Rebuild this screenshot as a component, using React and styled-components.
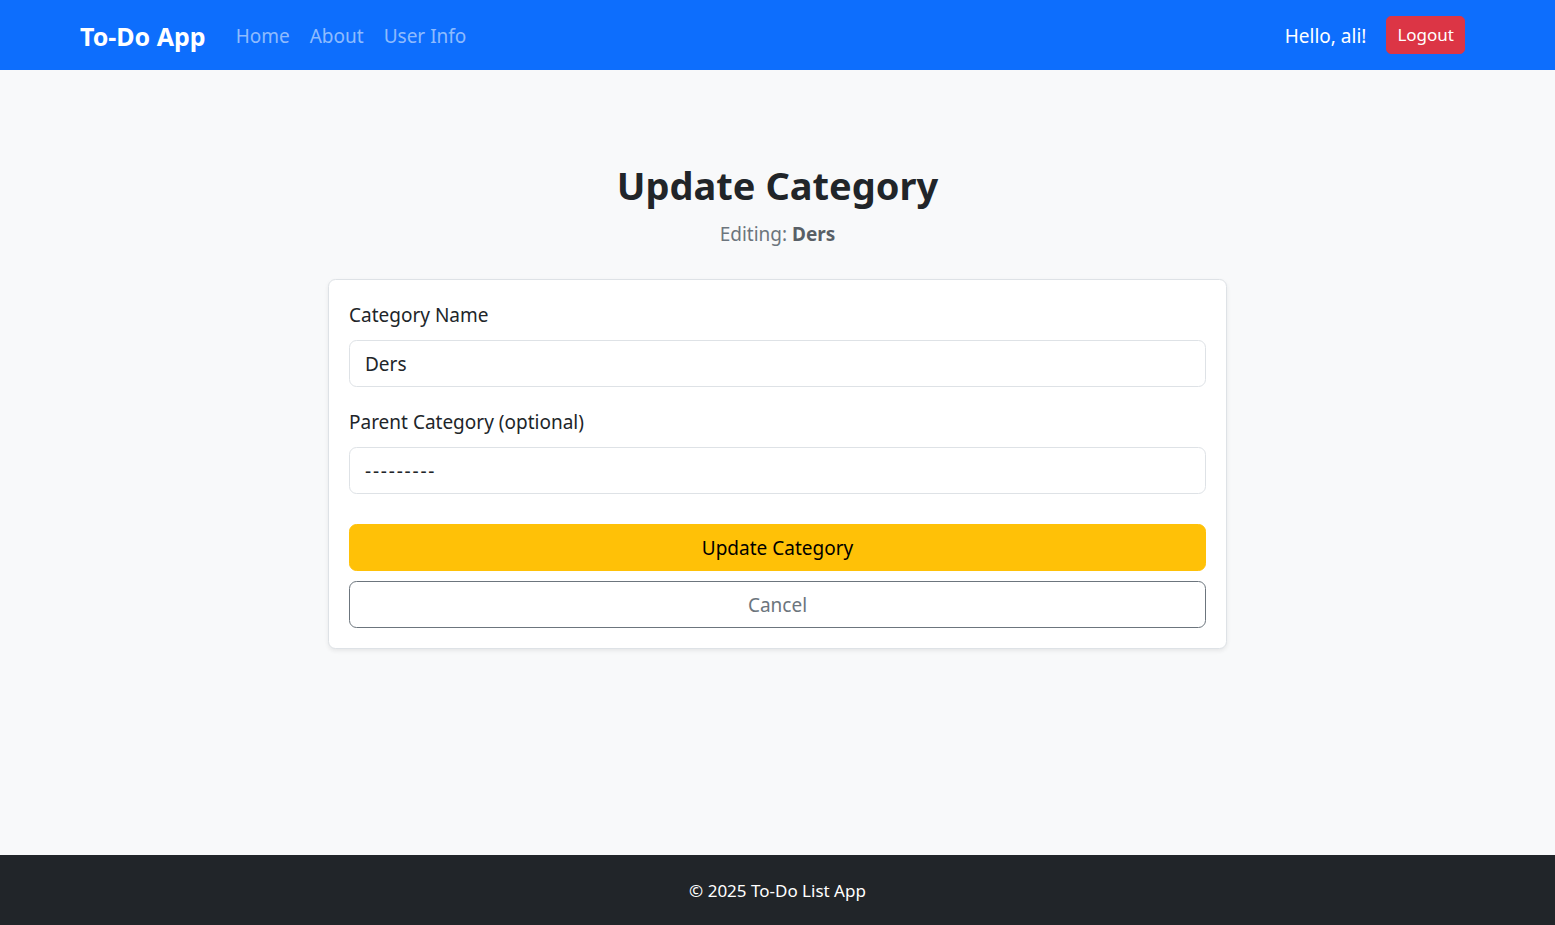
import React from "react";
import styled, { createGlobalStyle } from "styled-components";

const Global = createGlobalStyle`
  * { box-sizing: border-box; }
  html, body { margin: 0; padding: 0; }
  body {
    font-family: "Segoe UI", "Noto Sans", "Open Sans", sans-serif;
    font-size: 19px;
    line-height: 30px;
    color: #212529;
    background: #f8f9fa;
  }
`;

const Page = styled.div`
  min-height: 925px;
  display: flex;
  flex-direction: column;
`;

const Navbar = styled.nav`
  height: 70px;
  background: #0d6efd;
  display: flex;
  align-items: center;
  justify-content: space-between;
  padding: 1px 90px 0 80px;
`;

const NavLeft = styled.div`
  display: flex;
  align-items: center;
`;

const Brand = styled.a`
  font-size: 25px;
  font-weight: 700;
  color: #fff;
  text-decoration: none;
  margin-right: 20px;
  line-height: 38px;
`;

const NavLink = styled.a`
  color: rgba(255, 255, 255, 0.55);
  text-decoration: none;
  font-size: 19px;
  padding: 10px;
  line-height: 30px;
`;

const NavRight = styled.div`
  display: flex;
  align-items: center;
  gap: 20px;
`;

const Hello = styled.span`
  color: #fff;
  font-size: 19px;
`;

const LogoutBtn = styled.button`
  font-family: inherit;
  background: #dc3545;
  color: #fff;
  border: 1px solid #dc3545;
  border-radius: 5px;
  font-size: 17px;
  line-height: 26px;
  padding: 5px 10px;
  height: 38px;
  margin-top: -1px;
`;

const Main = styled.main`
  flex: 1;
  display: flex;
  flex-direction: column;
  align-items: center;
  padding-top: 91px;
`;

const Title = styled.h1`
  margin: 0 0 10px;
  font-size: 38px;
  font-weight: 700;
  line-height: 48px;
`;

const Sub = styled.p`
  margin: 0 0 30px;
  color: #6c757d;
  font-size: 19px;
  line-height: 30px;
  strong { color: #585f66; font-weight: 700; }
`;

const Card = styled.div`
  width: 899px;
  background: #fff;
  border: 1px solid #dee2e6;
  border-radius: 7.5px;
  box-shadow: 0 2px 4px rgba(0, 0, 0, 0.075);
  padding: 20px;
  display: flex;
  flex-direction: column;
`;

const Field = styled.div`
  display: flex;
  flex-direction: column;
  margin-bottom: ${(p) => p.$mb}px;
`;

const Label = styled.label`
  font-size: 19px;
  line-height: 30px;
  margin-bottom: 10px;
`;

const Input = styled.input`
  font-family: inherit;
  font-size: 19px;
  line-height: 30px;
  color: #212529;
  background: #fff;
  border: 1px solid #dee2e6;
  border-radius: 7.5px;
  padding: 7.5px 15px;
  height: 47px;
  outline: none;
`;

const Select = styled.select`
  font-family: inherit;
  font-size: 19px;
  line-height: 30px;
  letter-spacing: 1.8px;
  color: #212529;
  background: #fff;
  border: 1px solid #dee2e6;
  border-radius: 7.5px;
  padding: 7.5px 15px;
  height: 47px;
  appearance: none;
  -webkit-appearance: none;
  outline: none;
`;

const Button = styled.button`
  font-family: inherit;
  font-size: 19px;
  line-height: 30px;
  height: 47px;
  border-radius: 7.5px;
  padding: 7.5px 15px;
  width: 100%;
  background: ${(p) => (p.$variant === "warning" ? "#ffc107" : "#fff")};
  color: ${(p) => (p.$variant === "warning" ? "#000" : "#6c757d")};
  border: 1px solid ${(p) => (p.$variant === "warning" ? "#ffc107" : "#6c757d")};
  margin-top: ${(p) => p.$mt || 0}px;
`;

const Footer = styled.footer`
  height: 70px;
  background: #212529;
  color: #fff;
  display: flex;
  align-items: center;
  justify-content: center;
  font-size: 17px;
  padding-top: 2px;
`;

export default function App() {
  return (
    <Page>
      <Global />
      <Navbar>
        <NavLeft>
          <Brand href="#">To-Do App</Brand>
          <NavLink href="#">Home</NavLink>
          <NavLink href="#">About</NavLink>
          <NavLink href="#">User Info</NavLink>
        </NavLeft>
        <NavRight>
          <Hello>Hello, ali!</Hello>
          <LogoutBtn>Logout</LogoutBtn>
        </NavRight>
      </Navbar>
      <Main>
        <Title>Update Category</Title>
        <Sub>
          Editing: <strong>Ders</strong>
        </Sub>
        <Card>
          <Field $mb={20}>
            <Label>Category Name</Label>
            <Input defaultValue="Ders" />
          </Field>
          <Field $mb={30}>
            <Label>Parent Category (optional)</Label>
            <Select defaultValue="">
              <option value="">---------</option>
            </Select>
          </Field>
          <Button $variant="warning">Update Category</Button>
          <Button $mt={10}>Cancel</Button>
        </Card>
      </Main>
      <Footer>© 2025 To-Do List App</Footer>
    </Page>
  );
}
